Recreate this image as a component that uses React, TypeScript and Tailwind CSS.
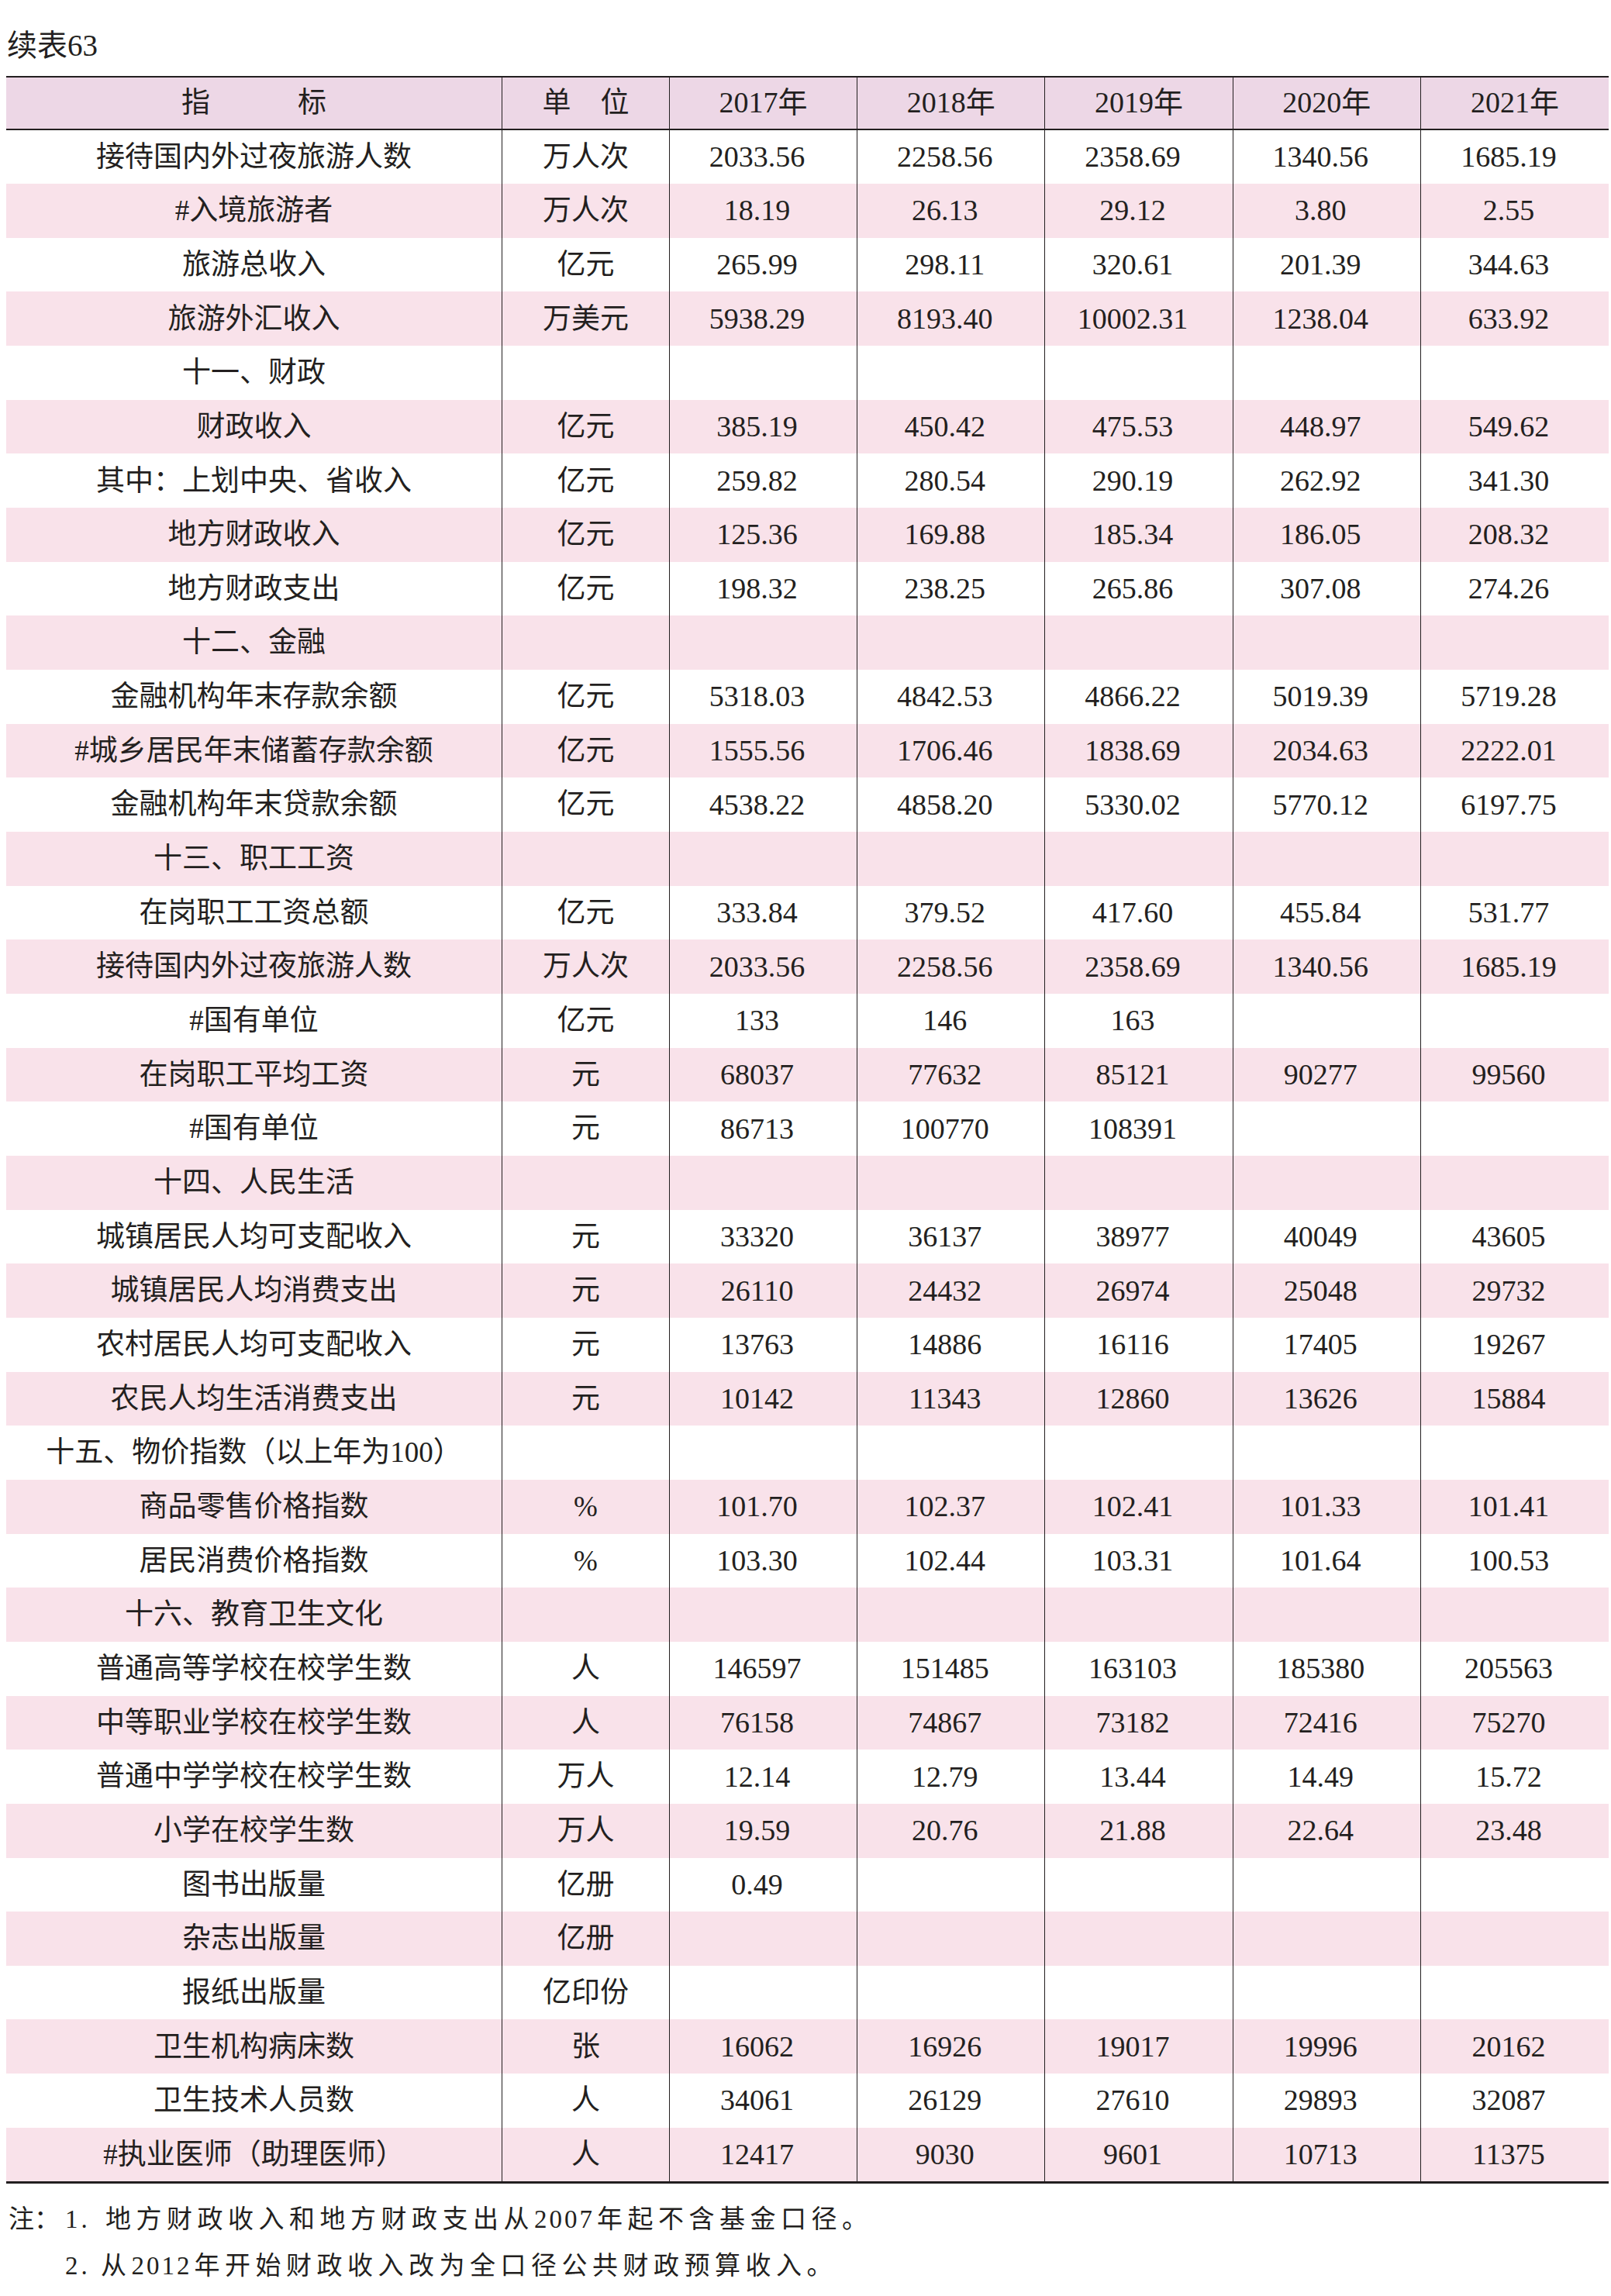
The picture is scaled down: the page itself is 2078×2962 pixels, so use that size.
import React from "react";

type Row = { label: string; unit?: string; vals?: string[]; section?: boolean };

const rows: Row[] = [
  { label: "接待国内外过夜旅游人数", unit: "万人次", vals: ["2033.56", "2258.56", "2358.69", "1340.56", "1685.19"] },
  { label: "#入境旅游者", unit: "万人次", vals: ["18.19", "26.13", "29.12", "3.80", "2.55"] },
  { label: "旅游总收入", unit: "亿元", vals: ["265.99", "298.11", "320.61", "201.39", "344.63"] },
  { label: "旅游外汇收入", unit: "万美元", vals: ["5938.29", "8193.40", "10002.31", "1238.04", "633.92"] },
  { label: "十一、财政", section: true },
  { label: "财政收入", unit: "亿元", vals: ["385.19", "450.42", "475.53", "448.97", "549.62"] },
  { label: "其中：上划中央、省收入", unit: "亿元", vals: ["259.82", "280.54", "290.19", "262.92", "341.30"] },
  { label: "地方财政收入", unit: "亿元", vals: ["125.36", "169.88", "185.34", "186.05", "208.32"] },
  { label: "地方财政支出", unit: "亿元", vals: ["198.32", "238.25", "265.86", "307.08", "274.26"] },
  { label: "十二、金融", section: true },
  { label: "金融机构年末存款余额", unit: "亿元", vals: ["5318.03", "4842.53", "4866.22", "5019.39", "5719.28"] },
  { label: "#城乡居民年末储蓄存款余额", unit: "亿元", vals: ["1555.56", "1706.46", "1838.69", "2034.63", "2222.01"] },
  { label: "金融机构年末贷款余额", unit: "亿元", vals: ["4538.22", "4858.20", "5330.02", "5770.12", "6197.75"] },
  { label: "十三、职工工资", section: true },
  { label: "在岗职工工资总额", unit: "亿元", vals: ["333.84", "379.52", "417.60", "455.84", "531.77"] },
  { label: "接待国内外过夜旅游人数", unit: "万人次", vals: ["2033.56", "2258.56", "2358.69", "1340.56", "1685.19"] },
  { label: "#国有单位", unit: "亿元", vals: ["133", "146", "163", "", ""] },
  { label: "在岗职工平均工资", unit: "元", vals: ["68037", "77632", "85121", "90277", "99560"] },
  { label: "#国有单位", unit: "元", vals: ["86713", "100770", "108391", "", ""] },
  { label: "十四、人民生活", section: true },
  { label: "城镇居民人均可支配收入", unit: "元", vals: ["33320", "36137", "38977", "40049", "43605"] },
  { label: "城镇居民人均消费支出", unit: "元", vals: ["26110", "24432", "26974", "25048", "29732"] },
  { label: "农村居民人均可支配收入", unit: "元", vals: ["13763", "14886", "16116", "17405", "19267"] },
  { label: "农民人均生活消费支出", unit: "元", vals: ["10142", "11343", "12860", "13626", "15884"] },
  { label: "十五、物价指数（以上年为100）", section: true },
  { label: "商品零售价格指数", unit: "%", vals: ["101.70", "102.37", "102.41", "101.33", "101.41"] },
  { label: "居民消费价格指数", unit: "%", vals: ["103.30", "102.44", "103.31", "101.64", "100.53"] },
  { label: "十六、教育卫生文化", section: true },
  { label: "普通高等学校在校学生数", unit: "人", vals: ["146597", "151485", "163103", "185380", "205563"] },
  { label: "中等职业学校在校学生数", unit: "人", vals: ["76158", "74867", "73182", "72416", "75270"] },
  { label: "普通中学学校在校学生数", unit: "万人", vals: ["12.14", "12.79", "13.44", "14.49", "15.72"] },
  { label: "小学在校学生数", unit: "万人", vals: ["19.59", "20.76", "21.88", "22.64", "23.48"] },
  { label: "图书出版量", unit: "亿册", vals: ["0.49", "", "", "", ""] },
  { label: "杂志出版量", unit: "亿册", vals: ["", "", "", "", ""] },
  { label: "报纸出版量", unit: "亿印份", vals: ["", "", "", "", ""] },
  { label: "卫生机构病床数", unit: "张", vals: ["16062", "16926", "19017", "19996", "20162"] },
  { label: "卫生技术人员数", unit: "人", vals: ["34061", "26129", "27610", "29893", "32087"] },
  { label: "#执业医师（助理医师）", unit: "人", vals: ["12417", "9030", "9601", "10713", "11375"] },
];

const years = ["2017年", "2018年", "2019年", "2020年", "2021年"];

const cell = "flex items-center justify-center border-r border-[#231f20] whitespace-nowrap";
const lastCell = "flex items-center justify-center whitespace-nowrap";

export default function App() {
  return (
    <div className="w-[2078px] min-h-[2962px] bg-white text-[#231f20] font-['Liberation_Serif','Noto_Sans_CJK_SC',serif]">
      <div className="pl-[9px] pt-[38px] h-[98px] text-[39px] leading-[42px]">续表63</div>
      <div className="ml-[8px] w-[2067px] border-t-[2.5px] border-b-[3px] border-[#231f20]">
        <div className="grid grid-cols-[640px_216px_repeat(5,minmax(0,1fr))] h-[67.5px] bg-[#edd7e6] border-b-2 border-[#231f20] text-[37px]">
          <div className={cell}>
            <span>指</span>
            <span className="ml-[113px]">标</span>
          </div>
          <div className={cell}>
            <span>单</span>
            <span className="ml-[38px]">位</span>
          </div>
          {years.map((y, i) => (
            <div key={y} className={i === 4 ? lastCell : cell}>
              <span className="text-[38px]">{y}</span>
            </div>
          ))}
        </div>
        {rows.map((r, i) => (
          <div
            key={i}
            className={`grid grid-cols-[640px_216px_repeat(5,minmax(0,1fr))] h-[69.66px] ${
              i % 2 === 1 ? "bg-[#f9e2ea]" : "bg-white"
            }`}
          >
            <div className={`${cell} text-[37px]`}>{r.label}</div>
            <div className={`${cell} text-[37px]`}>{r.unit ?? ""}</div>
            {[0, 1, 2, 3, 4].map((k) => (
              <div key={k} className={`${k === 4 ? lastCell : cell} text-[38px] pr-[16px]`}>
                {r.vals ? r.vals[k] : ""}
              </div>
            ))}
          </div>
        ))}
      </div>
      <div className="mt-[16px] pl-[11px] text-[33px] leading-[60px]">
        <div className="flex items-baseline">
          <span className="w-[73px] shrink-0">注：</span>
          <span className="w-[52px] shrink-0 tracking-[4px]">1.</span>
          <span className="tracking-[6.5px]">地方财政收入和地方财政支出从</span>
          <span className="tracking-[3px] mr-[3px]">2007</span>
          <span className="tracking-[6.5px]">年起不含基金口径。</span>
        </div>
        <div className="flex items-baseline">
          <span className="w-[73px] shrink-0"></span>
          <span className="w-[46px] shrink-0 tracking-[4px]">2.</span>
          <span className="tracking-[6.5px]">从</span>
          <span className="tracking-[3px] mr-[3px]">2012</span>
          <span className="tracking-[6.5px]">年开始财政收入改为全口径公共财政预算收入。</span>
        </div>
      </div>
    </div>
  );
}
